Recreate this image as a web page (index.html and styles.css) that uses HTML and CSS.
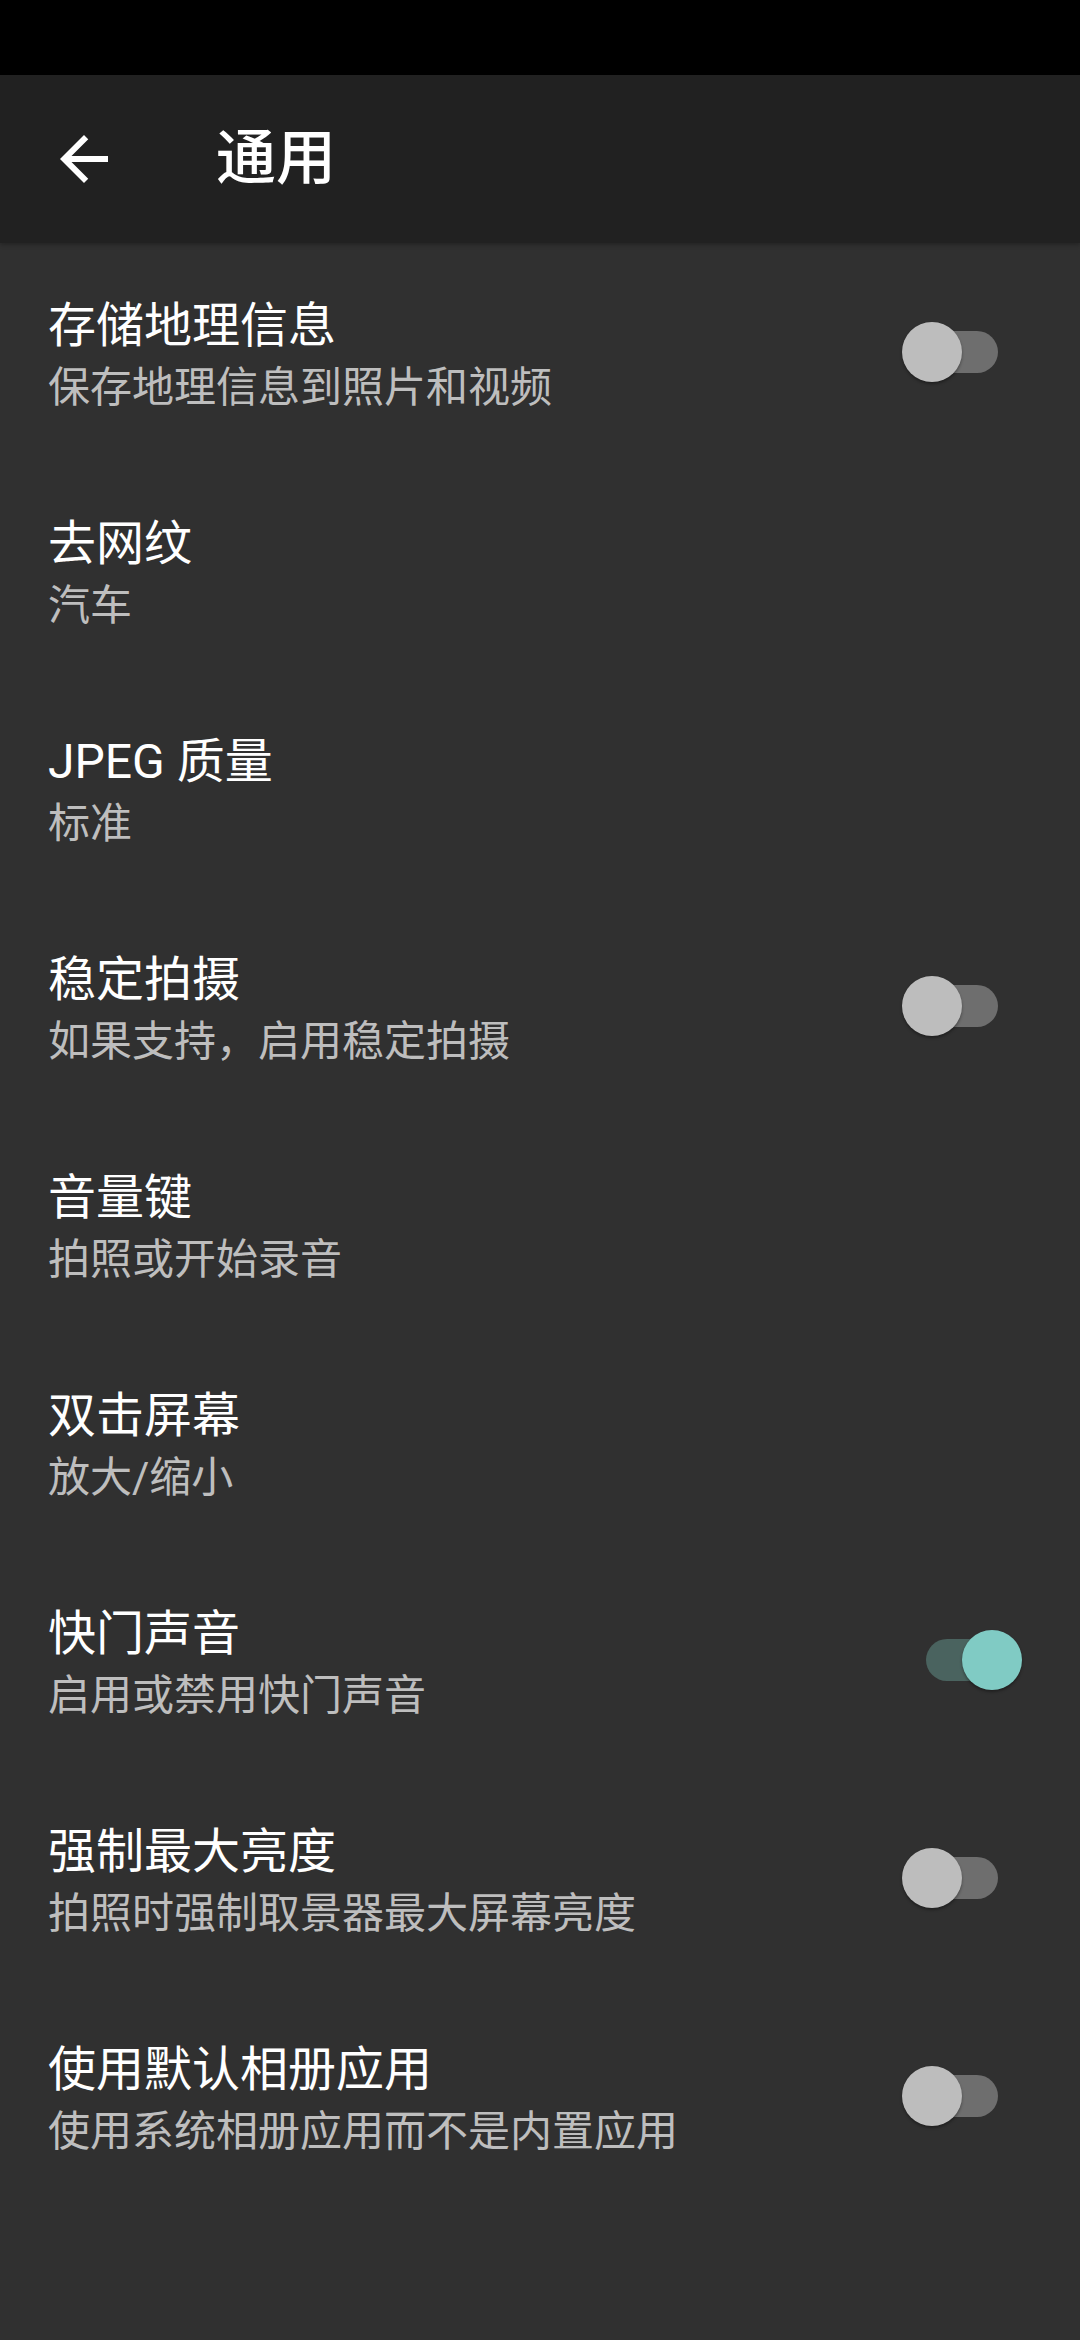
FILE: index.html
```html
<!DOCTYPE html>
<html lang="zh-CN">
<head>
    <meta charset="UTF-8">
    <meta name="viewport" content="width=device-width, initial-scale=1.0">
    <title>通用</title>
    <link rel="stylesheet" href="styles.css">
</head>
<body>

    <div class="status-bar"></div>

    <div class="toolbar">
        <button class="back-button">
            <svg viewBox="0 0 24 24" width="72" height="72">
                <path fill="#ffffff" d="M20 11H7.83l5.59-5.59L12 4l-8 8 8 8 1.41-1.41L7.83 13H20v-2z"/>
            </svg>
        </button>
        <h1 class="toolbar-title">通用</h1>
    </div>

    <ul class="pref-list">
        <li class="pref-item">
            <div class="pref-text">
                <span class="pref-title">存储地理信息</span>
                <span class="pref-summary">保存地理信息到照片和视频</span>
            </div>
            <span class="switch"></span>
        </li>
        <li class="pref-item">
            <div class="pref-text">
                <span class="pref-title">去网纹</span>
                <span class="pref-summary">汽车</span>
            </div>
        </li>
        <li class="pref-item">
            <div class="pref-text">
                <span class="pref-title">JPEG 质量</span>
                <span class="pref-summary">标准</span>
            </div>
        </li>
        <li class="pref-item">
            <div class="pref-text">
                <span class="pref-title">稳定拍摄</span>
                <span class="pref-summary">如果支持，启用稳定拍摄</span>
            </div>
            <span class="switch"></span>
        </li>
        <li class="pref-item">
            <div class="pref-text">
                <span class="pref-title">音量键</span>
                <span class="pref-summary">拍照或开始录音</span>
            </div>
        </li>
        <li class="pref-item">
            <div class="pref-text">
                <span class="pref-title">双击屏幕</span>
                <span class="pref-summary">放大/缩小</span>
            </div>
        </li>
        <li class="pref-item">
            <div class="pref-text">
                <span class="pref-title">快门声音</span>
                <span class="pref-summary">启用或禁用快门声音</span>
            </div>
            <span class="switch on"></span>
        </li>
        <li class="pref-item">
            <div class="pref-text">
                <span class="pref-title">强制最大亮度</span>
                <span class="pref-summary">拍照时强制取景器最大屏幕亮度</span>
            </div>
            <span class="switch"></span>
        </li>
        <li class="pref-item">
            <div class="pref-text">
                <span class="pref-title">使用默认相册应用</span>
                <span class="pref-summary">使用系统相册应用而不是内置应用</span>
            </div>
            <span class="switch"></span>
        </li>
    </ul>

</body>
</html>
```

FILE: styles.css
```css
html, body {
    margin: 0;
    padding: 0;
    background-color: #303030;
}

body {
    font-family: Roboto, "Noto Sans CJK SC", sans-serif;
    color: #ffffff;
    min-height: 2340px;
}

.status-bar {
    height: 75px;
    background-color: #000000;
}

.toolbar {
    display: flex;
    align-items: center;
    height: 168px;
    background-color: #212121;
    box-shadow: 0 2px 4px rgba(0, 0, 0, 0.25);
    position: relative;
}

.back-button {
    background: none;
    border: none;
    padding: 0;
    margin-left: 48px;
    width: 72px;
    height: 72px;
    display: flex;
}

.toolbar-title {
    margin: 0 0 0 96px;
    font-size: 60px;
    font-weight: 500;
    line-height: 80px;
}

.pref-list {
    list-style: none;
    margin: 0;
    padding: 0;
}

.pref-item {
    display: flex;
    align-items: center;
    box-sizing: border-box;
    height: 218px;
    padding-left: 48px;
    padding-top: 8px;
}

.pref-text {
    flex: 1;
    display: flex;
    flex-direction: column;
}

.pref-title {
    font-size: 48px;
    line-height: 64px;
}

.pref-summary {
    font-size: 42px;
    line-height: 60px;
    color: rgba(255, 255, 255, 0.7);
}

/* track is 94 wide, thumb overlays it */
.switch {
    position: relative;
    width: 94px;
    height: 42px;
    border-radius: 21px;
    background-color: #6e6e6e;
    margin-right: 82px;
    margin-top: -8px;
}

.switch::after {
    content: "";
    position: absolute;
    top: -9px;
    left: -2px;
    width: 60px;
    height: 60px;
    border-radius: 50%;
    background-color: #bdbdbd;
    box-shadow: 0 2px 3px rgba(0, 0, 0, 0.35);
}

.switch.on {
    background-color: #4a635f;
    margin-right: 60px;
}

.switch.on::after {
    left: 36px;
    background-color: #80cbc4;
}
```
